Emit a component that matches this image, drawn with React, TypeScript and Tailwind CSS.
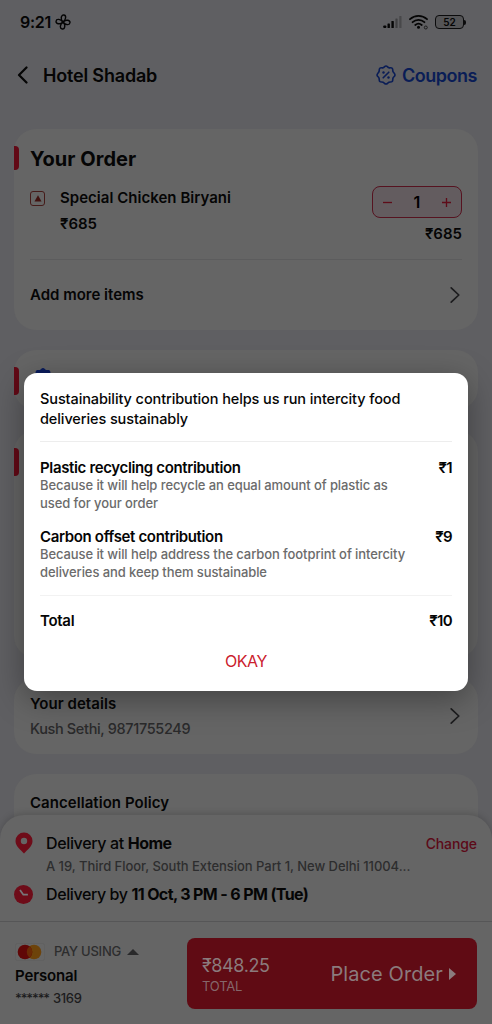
// App.tsx — checkout screen with the sustainability contribution dialog

const contributions = [
  {
    title: 'Plastic recycling contribution',
    amount: '₹1',
    lines: ['Because it will help recycle an equal amount of plastic as', 'used for your order'],
  },
  {
    title: 'Carbon offset contribution',
    amount: '₹9',
    lines: ['Because it will help address the carbon footprint of intercity', 'deliveries and keep them sustainable'],
  },
];

const sealPath =
  'M10 1c1.300 0 1.700 1.300 2.900 1.700s2.400-.3 3.300.6.300 2.200.800 3.300S19 8.700 19 10s-1.500 1.900-2 3.100.1 2.500-.8 3.400-2.200.2-3.300.7S11.300 19 10 19s-1.800-1.300-2.900-1.800-2.400.2-3.300-.7-.3-2.200-.8-3.400S1 11.300 1 10s1.500-2.200 2-3.400-.1-2.400.8-3.300 2.100-.2 3.300-.6S8.700 1 10 1Z';

function ChevronRight() {
  return (
    <svg aria-hidden="true" className="h-[18px] w-3 shrink-0 text-[#1c1c1e]" fill="none" stroke="currentColor" strokeWidth={1.7} viewBox="0 0 12 18">
      <path strokeLinecap="round" strokeLinejoin="round" d="M2.2 1.8 9.8 9l-7.6 7.2" />
    </svg>
  );
}

function StatusBar() {
  return (
    <div className="flex h-11 items-center justify-between pl-5 pr-[26px]">
      <div className="flex items-center gap-1">
        <span className="text-[16px] font-semibold leading-5 tracking-[-0.3px]">9:21</span>
        <svg aria-hidden="true" className="h-4 w-4" fill="none" stroke="currentColor" strokeWidth={1.4} viewBox="0 0 16 16">
          <g transform="rotate(8 8 8)">
            <path d="M8 8C4.800 6 5 1 7.800 1S10.800 5 8 8Z" />
            <path d="M8 8C10 4.800 15 5 15 7.800S11 10.800 8 8Z" />
            <path d="M8 8C11.200 10 11 15 8.200 15S5.200 11 8 8Z" />
            <path d="M8 8C6 11.200 1 11 1 8.200S5 5.200 8 8Z" />
          </g>
        </svg>
      </div>
      <div className="flex items-center">
        <svg aria-hidden="true" className="h-[14px] w-[19px]" viewBox="0 0 19 14" fill="currentColor">
          <rect x="0.3" y="10.5" width="3" height="2.5" rx="0.8" />
          <rect x="4.5" y="8.5" width="2.4" height="4.5" rx="0.6" />
          <rect x="8.4" y="6" width="2.4" height="7" rx="0.6" />
          <rect x="12.4" y="3.5" width="2.2" height="9.5" rx="0.6" opacity="0.35" />
          <rect x="16.3" y="1" width="2.2" height="12" rx="0.6" opacity="0.25" />
        </svg>
        <svg aria-hidden="true" className="ml-[7px] h-4 w-5" viewBox="0 0 20 16" fill="none" stroke="currentColor" strokeWidth={1.8}>
          <path strokeLinecap="round" d="M1 5.2a12.5 12.5 0 0 1 17 0M3.600 8.200a8.800 8.800 0 0 1 11.800 0M6.300 11a5 5 0 0 1 6.400 0" />
          <circle cx="9.5" cy="13.3" r="1.5" fill="currentColor" stroke="none" />
          <circle cx="16.8" cy="13.5" r="1.5" strokeWidth={1} opacity="0.7" />
        </svg>
        <div className="ml-[6px] flex h-[14px] w-[29px] items-center justify-center rounded-[4px] border-[1.5px] border-[#0b0b0c] bg-[#545456]">
          <span className="text-[10px] font-semibold leading-none">52</span>
        </div>
        <div className="h-[5px] w-[2px] rounded-r bg-[#0b0b0c]" />
      </div>
    </div>
  );
}

function Header() {
  return (
    <header className="flex h-[62px] items-center justify-between pl-[17px] pr-[15px]">
      <div className="flex items-center gap-[14px]">
        <svg aria-hidden="true" className="h-[18px] w-3" fill="none" stroke="currentColor" strokeWidth={2.2} viewBox="0 0 12 18">
          <path strokeLinecap="round" strokeLinejoin="round" d="M9.500 1.500 2 9l7.500 7.500" />
        </svg>
        <h1 className="pt-0.5 text-[18px] font-semibold leading-6 tracking-[-0.18px]">Hotel Shadab</h1>
      </div>
      <button className="flex items-center gap-[6px] text-[#0a1d56]">
        <svg aria-hidden="true" className="h-5 w-5" fill="none" stroke="currentColor" strokeWidth={1.6} strokeLinecap="round" strokeLinejoin="round" viewBox="0 0 20 20">
          <path d={sealPath} />
          <path d="m7.200 12.800 5.600-5.600" />
          <circle cx="7.5" cy="7.5" r="1.2" fill="currentColor" stroke="none" />
          <circle cx="12.5" cy="12.5" r="1.2" fill="currentColor" stroke="none" />
        </svg>
        <span className="pt-0.5 text-[18px] font-semibold leading-6 tracking-[-0.48px]">Coupons</span>
      </button>
    </header>
  );
}

function OrderCard() {
  return (
    <section className="h-[201px] rounded-[22px] bg-[#656565] pt-[17px]">
      <div className="flex h-6 items-center">
        <div className="h-6 w-[5px] rounded-r bg-[#620916]" />
        <h2 className="ml-[11px] pt-px text-[20px] font-bold leading-6 tracking-[0.05px]">Your Order</h2>
      </div>
      <div className="mx-4 flex h-[90px] border-b border-[#5c5c5d] pt-[15px]">
        <div className="mt-[6px] flex h-[15px] w-[15px] items-center justify-center rounded-[3px] border-[1.5px] border-[#451b19]">
          <svg aria-hidden="true" className="h-[7px] w-2 text-[#401210]" viewBox="0 0 8 7" fill="currentColor">
            <path d="M4 .3 7.500 6.500h-7Z" />
          </svg>
        </div>
        <div className="ml-[15px] flex-1 text-[15px] font-semibold leading-[26px]">
          <p className="tracking-[0.03px]">Special Chicken Biryani</p>
          <p>₹685</p>
        </div>
        <div className="mt-px w-[90px]">
          <div className="flex h-8 items-center justify-between rounded-[8px] border border-[#561320] bg-[#635c5f] px-[9px] text-[#5e0c19]">
            <svg aria-hidden="true" className="h-[11px] w-[11px]" viewBox="0 0 11 11" fill="none" stroke="currentColor" strokeWidth={1.3}>
              <path d="M1 5.500h9" />
            </svg>
            <span className="text-[16px] font-semibold text-black">1</span>
            <svg aria-hidden="true" className="h-[11px] w-[11px]" viewBox="0 0 11 11" fill="none" stroke="currentColor" strokeWidth={1.3}>
              <path d="M1 5.500h9M5.500 1v9" />
            </svg>
          </div>
          <p className="mt-[5px] text-right text-[15px] font-semibold leading-[22px]">₹685</p>
        </div>
      </div>
      <div className="flex h-[70px] items-center justify-between pl-4 pr-[17px]">
        <p className="pt-px text-[15px] font-semibold">Add more items</p>
        <ChevronRight />
      </div>
    </section>
  );
}

function DeliverySheet() {
  return (
    <footer className="absolute inset-x-0 bottom-0 h-[209px] rounded-t-[24px] bg-[#656565] shadow-[0_-2px_6px_rgba(0,0,0,0.15)]">
      <div className="flex h-[107px] flex-col border-b border-[#565657] pt-[17px]">
        <div className="flex h-[22px] items-center px-[15px]">
          <svg aria-hidden="true" className="h-[22px] w-[18px] text-[#6e0c19]" viewBox="0 0 18 22" fill="currentColor">
            <path fillRule="evenodd" d="M9 .5a8.500 8.500 0 0 0-8.500 8.500C.5 14.500 6 18 9 21.500c3-3.500 8.500-7 8.500-12.500A8.500 8.500 0 0 0 9 .5Zm0 5.300a3.200 3.200 0 1 1 0 6.400 3.200 3.200 0 0 1 0-6.400Z" />
          </svg>
          <p className="ml-[13px] flex-1 text-[16px] leading-[22px]">
            <span className="font-medium tracking-[-0.35px]">Delivery at </span>
            <span className="font-bold tracking-[-0.6px]">Home</span>
          </p>
          <button className="text-[14px] font-medium tracking-[-0.1px] text-[#5c0a18]">Change</button>
        </div>
        <p className="mt-[3px] pl-[46px] text-[13px] font-medium leading-[18px] tracking-[-0.04px] text-[#2d2d2e]">A 19, Third Floor, South Extension Part 1, New Delhi 11004...</p>
        <div className="mt-2 flex h-[22px] items-center pl-[14px]">
          <svg aria-hidden="true" className="h-[19px] w-[19px]" viewBox="0 0 19 19">
            <circle cx="9.5" cy="9.5" r="9.5" fill="#6e0c19" />
            <path d="m6 5 3.300 4.700h4.600" fill="none" stroke="#77777a" strokeWidth={1.8} />
          </svg>
          <p className="ml-[13px] text-[16px] leading-[22px]">
            <span className="font-medium tracking-[-0.4px]">Delivery by </span>
            <span className="font-bold tracking-[-0.63px]">11 Oct, 3 PM - 6 PM (Tue)</span>
          </p>
        </div>
      </div>
      <div className="flex justify-between px-[15px] pt-4">
        <div className="pt-1">
          <div className="flex h-[19px] items-center">
            <svg aria-hidden="true" className="h-[18px] w-[30px]" viewBox="0 0 30 18">
              <rect x="0.5" y="0.5" width="29" height="17" rx="2" fill="#666666" stroke="#616161" />
              <circle cx="19" cy="9" r="7.3" fill="#6d430a" />
              <circle cx="10" cy="9" r="7.3" fill="#600707" />
              <path d="M14.500 3.300a7.300 7.300 0 0 1 0 11.400 7.300 7.300 0 0 1 0-11.400Z" fill="#6b2a06" />
            </svg>
            <span className="ml-[9px] text-[13px] font-medium tracking-[-0.25px] text-[#2d2d2e]">PAY USING</span>
            <svg aria-hidden="true" className="ml-[6px] h-[6px] w-3 text-[#29292a]" viewBox="0 0 12 6" fill="currentColor">
              <path d="m6 0 6 6H0Z" />
            </svg>
          </div>
          <p className="mt-[5px] text-[15px] font-semibold leading-5 tracking-[-0.15px]">Personal</p>
          <p className="mt-[3px] flex gap-1 text-[13px] font-medium leading-[18px] text-[#1c1c1d]">
            <span className="tracking-[-1.1px]">******</span>
            <span className="tracking-[-0.35px]">3169</span>
          </p>
        </div>
        <button className="flex h-[71px] w-[290px] items-center justify-between rounded-[8px] bg-[#600b14] pl-[15px] pr-[21px] text-[#8b7b7d]">
          <span className="flex flex-col pt-[3px] text-left">
            <span className="text-[18px] leading-[22px] tracking-[-0.4px]">₹848.25</span>
            <span className="text-[13px] leading-[19px] tracking-[-0.2px] text-[#85676b]">TOTAL</span>
          </span>
          <span className="flex items-center gap-[6px] text-[20px] tracking-[0.1px]">
            Place Order
            <svg aria-hidden="true" className="h-3 w-[7px]" viewBox="0 0 7 12" fill="currentColor">
              <path d="M0 0 7 6 0 12Z" />
            </svg>
          </span>
        </button>
      </div>
    </footer>
  );
}

function ContributionDialog() {
  return (
    <div role="dialog" className="absolute left-[24px] top-[373px] h-[318px] w-[444px] rounded-[13px] bg-white px-4 pt-4 shadow-[0_8px_32px_rgba(0,0,0,0.35)]">
      <h2 className="border-b border-[#ededed] pb-3 text-[14.5px] font-medium leading-5 tracking-[-0.1px]">
        Sustainability contribution helps us run intercity food
        <br />
        deliveries sustainably
      </h2>
      <div className="flex flex-col gap-4 border-b border-[#f2f2f2] pb-[14px] pt-[17px]">
        {contributions.map((c) => (
          <div key={c.title}>
            <div className="flex h-[17px] justify-between text-[15px] font-semibold leading-[18px]">
              <span className="tracking-[-0.35px]">{c.title}</span>
              <span className="tracking-[-0.6px]">{c.amount}</span>
            </div>
            {c.lines.map((line) => (
              <p key={line} className="whitespace-nowrap text-[13px] font-medium leading-[18px] tracking-[-0.09px] text-[#6b6b6b]">{line}</p>
            ))}
          </div>
        ))}
      </div>
      <div className="flex justify-between pt-4 text-[15px] font-semibold leading-[18px]">
        <span className="tracking-[-0.3px]">Total</span>
        <span className="tracking-[-0.6px]">₹10</span>
      </div>
      <button className="mt-5 block w-full text-center text-[16px] leading-[22px] tracking-[-0.4px] text-[#cb202d]">OKAY</button>
    </div>
  );
}

export default function App() {
  return (
    <div className="relative h-[1024px] w-[492px] overflow-hidden bg-[#5f5f62] font-['Inter','Noto_Sans',sans-serif] text-[#050505]">
      <StatusBar />
      <Header />
      <main className="flex flex-col gap-5 px-[14px] pt-[23px]">
        <OrderCard />
        <section className="flex h-[60px] rounded-[22px] bg-[#656565] pt-[17px]">
          <div className="h-7 w-[5px] rounded-r bg-[#620916]" />
          <svg aria-hidden="true" className="ml-[13px] h-[22px] w-[22px] text-[#0a1c5c]" viewBox="0 0 20 20" fill="currentColor">
            <path d={sealPath} />
          </svg>
        </section>
        <section className="h-[228px] rounded-[22px] bg-[#656565] pt-[18px]">
          <div className="h-7 w-[5px] rounded-r bg-[#620916]" />
        </section>
        <section className="flex h-[76px] items-center justify-between rounded-[22px] bg-[#656565] pl-4 pr-[17px]">
          <div className="pt-0.5">
            <p className="text-[15px] font-semibold leading-6 tracking-[0.05px]">Your details</p>
            <p className="text-[14.5px] font-medium leading-[26px] tracking-[-0.35px] text-[#2a2a2b]">Kush Sethi, 9871755249</p>
          </div>
          <ChevronRight />
        </section>
        <section className="h-[120px] rounded-t-[22px] bg-[#656565] pl-4 pt-[17px]">
          <p className="text-[15px] font-semibold leading-6 tracking-[0.05px]">Cancellation Policy</p>
        </section>
      </main>
      <DeliverySheet />
      <ContributionDialog />
    </div>
  );
}
